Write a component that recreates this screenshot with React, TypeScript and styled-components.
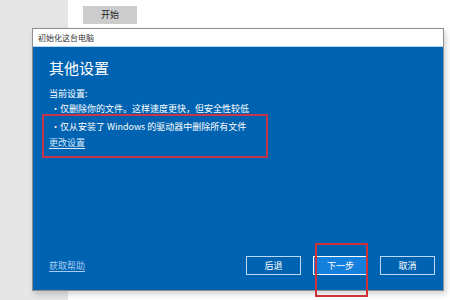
import styled, { createGlobalStyle } from "styled-components";

const GlobalStyle = createGlobalStyle`
  html, body {
    margin: 0;
    padding: 0;
    width: 450px;
    height: 300px;
    overflow: hidden;
  }
  body {
    font-family: "Noto Sans CJK SC", "Noto Sans", sans-serif;
  }
`;

const Desktop = styled.div`
  position: relative;
  width: 450px;
  height: 300px;
  background: linear-gradient(to right, #e6e6e6 0, #e6e6e6 68px, #ffffff 68px);
  padding-top: 6px;
  box-sizing: border-box;
`;

const StartButton = styled.div`
  margin-left: 83px;
  width: 54px;
  height: 18px;
  background: #cccccc;
  color: #222;
  font-size: 9px;
  line-height: 18px;
  text-align: center;
`;

const Dialog = styled.div`
  margin: 4px 0 0 32px;
  width: 412px;
  height: 263px;
  display: flex;
  flex-direction: column;
  border: 1px solid #8f8f8f;
  box-sizing: border-box;
  box-shadow: 2px 3px 6px rgba(0, 0, 0, 0.18);
`;

const TitleBar = styled.div`
  height: 17px;
  background: #ffffff;
  color: #333;
  font-size: 8px;
  line-height: 17px;
  padding-left: 5px;
  border-bottom: 1px solid #b7d3ee;
`;

const Body = styled.div`
  flex: 1;
  background: #0063b1;
  color: #ffffff;
  display: flex;
  flex-direction: column;
  padding: 0 8px 15px 16px;
`;

const Heading = styled.div`
  margin-top: 11px;
  font-size: 15px;
  line-height: 20px;
  height: 20px;
`;

const Line = styled.div<{ $top?: number }>`
  margin-top: ${(p) => p.$top ?? 0}px;
  font-size: 9px;
  line-height: 15px;
  height: 15px;
  white-space: nowrap;
  display: flex;
`;

const Dot = styled.span`
  width: 11px;
  padding-left: 2px;
  box-sizing: border-box;
`;

const Highlight = styled.div`
  position: relative;
  margin: -2px 0 0 -7px;
  width: 226px;
  box-sizing: border-box;
  border: 2px solid #c8344a;
  padding: 3px 0 6px 5px;
`;

const LinkText = styled.span<{ $color?: string }>`
  font-size: 9px;
  line-height: 15px;
  color: ${(p) => p.$color ?? "#d6e8fa"};
  text-decoration: underline;
  text-underline-offset: 2px;
`;

const Footer = styled.div`
  margin-top: auto;
  display: flex;
  align-items: center;
`;

const Buttons = styled.div`
  margin-left: auto;
  display: flex;
  gap: 12px;
`;

const ButtonWrap = styled.div`
  position: relative;
`;

const DialogButton = styled.div<{ $primary?: boolean }>`
  width: 55px;
  height: 19px;
  box-sizing: border-box;
  border: 1px solid ${(p) => (p.$primary ? "#ffffff" : "#bcd7f2")};
  background: ${(p) => (p.$primary ? "#1580dc" : "transparent")};
  color: #ffffff;
  font-size: 9px;
  line-height: 17px;
  text-align: center;
`;

const Marker = styled.div`
  position: absolute;
  left: 2px;
  top: -13px;
  width: 53px;
  height: 54px;
  border: 2px solid #d0303a;
  box-sizing: border-box;
  pointer-events: none;
`;

export default function App() {
  return (
    <>
      <GlobalStyle />
      <Desktop>
        <StartButton>开始</StartButton>
        <Dialog>
          <TitleBar>初始化这台电脑</TitleBar>
          <Body>
            <Heading>其他设置</Heading>
            <Line $top={8}>当前设置:</Line>
            <Line>
              <Dot>•</Dot>仅删除你的文件。这样速度更快，但安全性较低
            </Line>
            <Highlight>
              <Line>
                <Dot>•</Dot>仅从安装了 Windows 的驱动器中删除所有文件
              </Line>
              <Line $top={1}>
                <LinkText>更改设置</LinkText>
              </Line>
            </Highlight>
            <Footer>
              <LinkText $color="#a9cdf2">获取帮助</LinkText>
              <Buttons>
                <DialogButton>后退</DialogButton>
                <ButtonWrap>
                  <DialogButton $primary>下一步</DialogButton>
                  <Marker />
                </ButtonWrap>
                <DialogButton>取消</DialogButton>
              </Buttons>
            </Footer>
          </Body>
        </Dialog>
      </Desktop>
    </>
  );
}
